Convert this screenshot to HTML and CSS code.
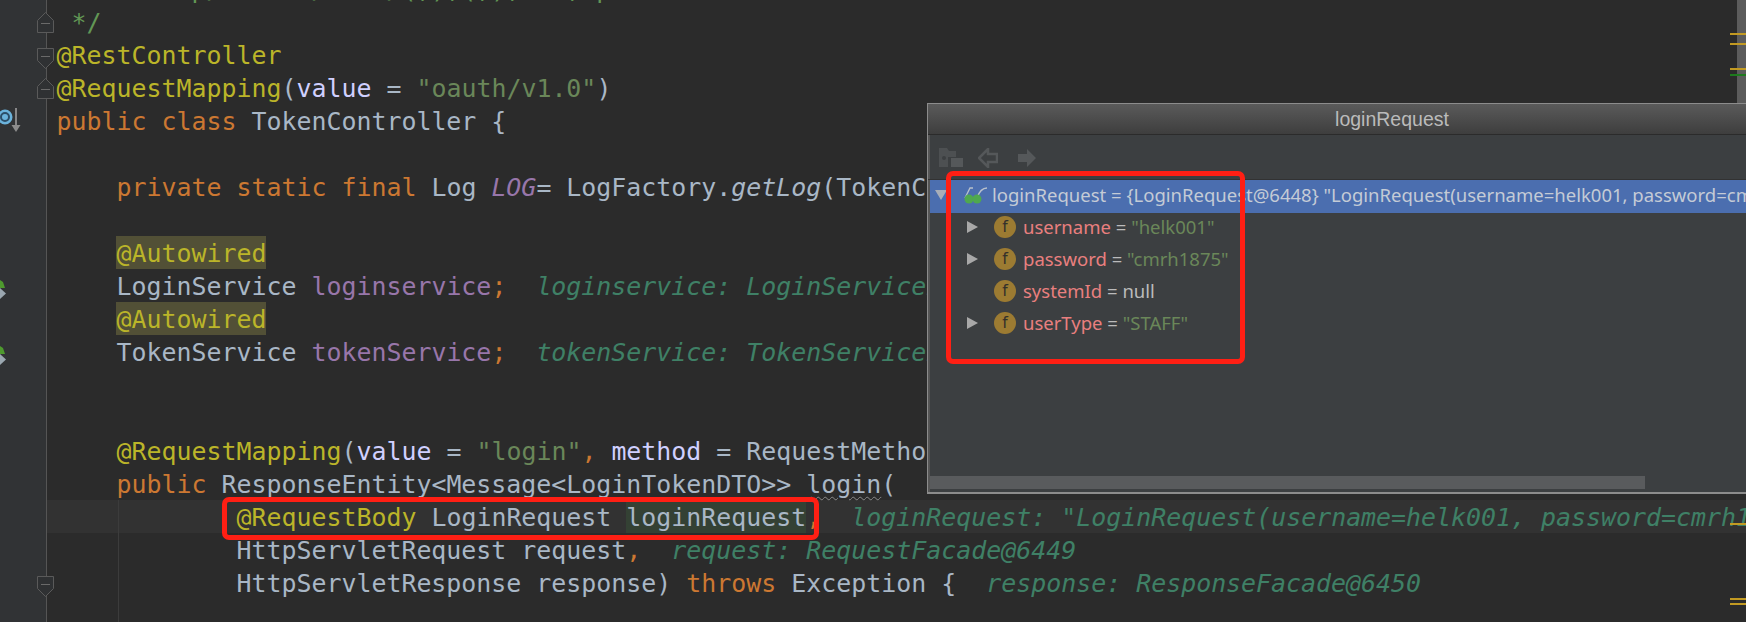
FILE: index.html
```html
<!DOCTYPE html>
<html lang="en">
<head>
<meta charset="utf-8">
<title>TokenController</title>
<link rel="stylesheet" href="styles.css">
</head>
<body>
<main class="editor">
  <aside class="gutter">
    <svg class="gutter-art" width="46" height="622" viewBox="0 0 46 622">
      <g fill="#2f3133" stroke="#5a5a5a" stroke-width="1">
        <path d="M37.5 32.5V20.5L45.5 12.5L53.5 20.5V32.5Z"/>
        <path d="M37.5 48.5H53.5V60.5L45.5 68.5L37.5 60.5Z"/>
        <path d="M37.5 98.5V86.5L45.5 78.5L53.5 86.5V98.5Z"/>
        <path d="M37.5 576.5H53.5V588.5L45.5 596.5L37.5 588.5Z"/>
      </g>
      <path d="M41 23.5H50M41 56.5H50M41 89.5H50M41 584.5H50" stroke="#6a6a6a" stroke-width="1"/>
      <circle cx="5" cy="117" r="7.5" fill="#6bb3dc"/>
      <circle cx="5" cy="117" r="4" fill="none" stroke="#2c4e68" stroke-width="2"/>
      <path d="M16 108V125" stroke="#a5a5a5" stroke-width="1.5"/>
      <path d="M11.5 125H20.5L16 132Z" fill="#8c8c8c"/>
      <path d="M0 280L3 282L5 288H0Z" fill="#4e9a2e"/>
      <path d="M0 288L6 293.5L0 299Z" fill="#9aa7b0"/>
      <path d="M0 346L3 348L5 354H0Z" fill="#4e9a2e"/>
      <path d="M0 354L6 359.5L0 365Z" fill="#9aa7b0"/>
    </svg>
  </aside>
  <section class="code">
    <div class="line cm"> * token p/oauth /v1.0/(,),(,),   , p</div>
    <div class="line cm"> */</div>
    <div class="line"><span class="an">@RestController</span></div>
    <div class="line"><span class="an">@RequestMapping</span>(<span class="pn">value</span> = <span class="st">"oauth/v1.0"</span>)</div>
    <div class="line"><span class="kw">public class </span>TokenController {</div>
    <div class="line"></div>
    <div class="line">    <span class="kw">private static final </span>Log <span class="fd it">LOG</span>= LogFactory.<span class="it">getLog</span>(TokenController.class);</div>
    <div class="line"></div>
    <div class="line">    <span class="an mark">@Autowired</span></div>
    <div class="line">    LoginService <span class="fd">loginservice</span><span class="kw">;</span>  <span class="hint">loginservice: LoginServiceImpl@6446</span></div>
    <div class="line">    <span class="an mark">@Autowired</span></div>
    <div class="line">    TokenService <span class="fd">tokenService</span><span class="kw">;</span>  <span class="hint">tokenService: TokenServiceImpl@6447</span></div>
    <div class="line"></div>
    <div class="line"></div>
    <div class="line">    <span class="an">@RequestMapping</span>(<span class="pn">value</span> = <span class="st">"login"</span><span class="kw">,</span> <span class="pn">method</span> = RequestMethod.POST)</div>
    <div class="line">    <span class="kw">public </span>ResponseEntity&lt;Message&lt;LoginTokenDTO&gt;&gt; <span class="wavy">login</span>(</div>
    <div class="line current">            <span class="an">@RequestBody</span> LoginRequest <span class="mark param">loginRequest</span><span class="kw">,</span>  <span class="hint">loginRequest: "LoginRequest(username=helk001, password=cmrh1875, systemId=null)"</span></div>
    <div class="line">            HttpServletRequest request<span class="kw">,</span>  <span class="hint">request: RequestFacade@6449</span></div>
    <div class="line">            HttpServletResponse response) <span class="kw">throws </span>Exception {  <span class="hint">response: ResponseFacade@6450</span></div>
    <div class="line"></div>
  </section>
  <div class="indent-guide"></div>
  <div class="stripe">
    <i class="tick orange t1"></i>
    <i class="tick orange t2"></i>
    <i class="tick orange t3"></i>
    <i class="tick green t4"></i>
    <i class="tick orange t5"></i>
    <i class="tick orange t6"></i>
    <i class="tick orange t7"></i>
  </div>
</main>

<section class="popup">
  <header class="popup-title">loginRequest</header>
  <div class="toolbar">
    <svg width="24" height="20" viewBox="0 0 24 20"><path d="M0 0H8L10 3H17V9H9V19H0Z" fill="#4d5052"/><circle cx="5" cy="10" r="2" fill="#3c3f41"/><rect x="12" y="10" width="12" height="9" fill="#55585a"/></svg>
    <svg class="arrow-left" width="20" height="20" viewBox="0 0 20 20"><path d="M10 1L1 10L10 19V14H19V6H10Z" fill="none" stroke="#55585a" stroke-width="2.5"/></svg>
    <svg class="arrow-right" width="20" height="20" viewBox="0 0 20 20"><path d="M10 1L19 10L10 19V14H1V6H10Z" fill="#55585a"/></svg>
  </div>
  <div class="tree">
    <div class="row selected">
      <svg class="twist" width="12" height="10" viewBox="0 0 12 10"><path d="M0 0H12L6 10Z" fill="#a8aeb8"/></svg>
      <svg class="glasses" width="24" height="18" viewBox="0 0 24 18">
        <path d="M1 12L6 2H9M13 12C15 6 19 2 23 2" fill="none" stroke="#b9c1cc" stroke-width="1.3"/>
        <circle cx="5" cy="13" r="4.5" fill="#4fa84f"/><circle cx="13" cy="13" r="4.5" fill="#4fa84f"/>
      </svg>
      <span class="val">loginRequest = {LoginRequest@6448} "LoginRequest(username=helk001, password=cmrh1875, systemId=null, userType=STAFF)"</span>
    </div>
    <div class="row child"><svg class="twist-r" width="11" height="12" viewBox="0 0 11 12"><path d="M0 0L11 6L0 12Z" fill="#a8a8a8"/></svg><span class="f">f</span><span class="name">username</span><span class="val"> = </span><span class="str">"helk001"</span></div>
    <div class="row child"><svg class="twist-r" width="11" height="12" viewBox="0 0 11 12"><path d="M0 0L11 6L0 12Z" fill="#a8a8a8"/></svg><span class="f">f</span><span class="name">password</span><span class="val"> = </span><span class="str">"cmrh1875"</span></div>
    <div class="row child leaf"><span class="f">f</span><span class="name">systemId</span><span class="val"> = null</span></div>
    <div class="row child"><svg class="twist-r" width="11" height="12" viewBox="0 0 11 12"><path d="M0 0L11 6L0 12Z" fill="#a8a8a8"/></svg><span class="f">f</span><span class="name">userType</span><span class="val"> = </span><span class="str">"STAFF"</span></div>
  </div>
  <div class="hscroll"><div class="hthumb"></div></div>
</section>

<div class="redbox box-tree"></div>
<div class="redbox box-param"></div>
</body>
</html>
```
FILE: styles.css
```css
* { box-sizing: border-box; }
html, body {
  margin: 0;
  width: 1746px;
  height: 622px;
  overflow: hidden;
  background: #2b2b2b;
}
body { position: relative; }

.editor {
  display: flex;
  height: 622px;
  overflow: hidden;
  position: relative;
  font-family: "DejaVu Sans Mono", monospace;
  font-size: 24.92px;
  color: #a9b7c6;
}
.gutter {
  flex: 0 0 46px;
  background: #313335;
  border-right: 1px solid #555;
  position: relative;
  z-index: 1;
  overflow: visible;
}
.gutter-art { display: block; overflow: visible; }
.code {
  flex: 1;
  min-width: 0;
  margin-top: -28px;
}
.line {
  height: 33px;
  line-height: 33px;
  padding: 1px 0 0 9.5px;
  white-space: pre;
}
.current { background: #323232; }
.cm { color: #629755; }
.an { color: #bbb529; }
.kw { color: #cc7832; }
.st { color: #6a8759; }
.pn { color: #d0d0ff; }
.fd { color: #9876aa; }
.it { font-style: italic; }
.hint { color: #3f8066; font-style: italic; }
.mark {
  background: #525036;
  display: inline-block;
  vertical-align: top;
  height: 33px;
  margin-top: -1px;
  line-height: 35px;
}
.param { background: #344134; color: #a9b7c6; }
.wavy { text-decoration: underline wavy #8a8a8a; text-decoration-thickness: 1px; text-underline-offset: 3px; }

.indent-guide {
  position: absolute;
  left: 118px;
  top: 500px;
  bottom: 0;
  width: 1px;
  background: #3c3c3c;
}
.stripe {
  position: absolute;
  right: 0;
  top: 0;
  bottom: 0;
  width: 16px;
}
.stripe::before {
  content: "";
  position: absolute;
  right: 0;
  top: 0;
  width: 9px;
  height: 103px;
  background: #5c5c5c;
}
.tick { position: absolute; left: 0; width: 16px; height: 2px; }
.orange { background: #c29a22; }
.green { background: #1e7a1e; }
.t1 { top: 33px; }
.t2 { top: 43px; }
.t3 { top: 68px; }
.t4 { top: 74px; }
.t5 { top: 523px; }
.t6 { top: 598px; }
.t7 { top: 603px; }

.popup {
  position: absolute;
  left: 927px;
  top: 103px;
  width: 930px;
  height: 391px;
  background: #3c3f41;
  border: 1px solid #8c8c8c;
  border-bottom-width: 2px;
  box-shadow: inset 2px 0 0 #555;
  display: flex;
  flex-direction: column;
  overflow: hidden;
  font-family: "Noto Sans", sans-serif;
  font-size: 18.5px;
  color: #bbbbbb;
}
.popup-title {
  flex: 0 0 29px;
  background: linear-gradient(#5a5a5a, #3e3e3e);
  border-bottom: 1px solid #2b2b2b;
  text-align: center;
  line-height: 30px;
  font-family: "Liberation Sans", sans-serif;
  font-size: 19.5px;
  color: #bbbbbb;
}
.toolbar {
  flex: 0 0 45px;
  display: flex;
  align-items: center;
  padding: 1px 0 0 11px;
  gap: 15px;
  border-bottom: 1px solid #323232;
}
.toolbar svg, .row svg { flex: none; }
.toolbar .arrow-right { margin-left: 4px; }
.tree { flex: 1; padding-left: 2px; }
.row {
  height: 32px;
  display: flex;
  align-items: center;
  white-space: pre;
  padding-bottom: 5px;
}
.selected {
  height: 33px;
  background: #4b6eaf;
  padding-left: 5px;
  padding-bottom: 4px;
}
.selected .twist { margin-right: 17px; }
.selected .glasses { margin-right: 4px; }
.selected .val { color: #c4cbd6; }
.child { padding-left: 37px; }
.leaf { padding-left: 64px; }
.twist-r { margin-right: 16px; }
.f {
  flex: 0 0 22px;
  width: 22px;
  height: 22px;
  border-radius: 50%;
  background: #9c7b32;
  color: #33302a;
  text-align: center;
  line-height: 21px;
  font-size: 16px;
  margin-right: 7px;
}
.name { color: #e97f7f; }
.str { color: #6a8759; }
.hscroll {
  flex: 0 0 16px;
  padding: 0 0 3px 2px;
}
.hthumb { width: 715px; height: 13px; background: #595b5d; }

.redbox {
  position: absolute;
  border: 5px solid #ff1f14;
  border-radius: 7px;
}
.box-tree { left: 946px; top: 171px; width: 299px; height: 193px; }
.box-param { left: 222px; top: 497px; width: 597px; height: 43px; }
```
